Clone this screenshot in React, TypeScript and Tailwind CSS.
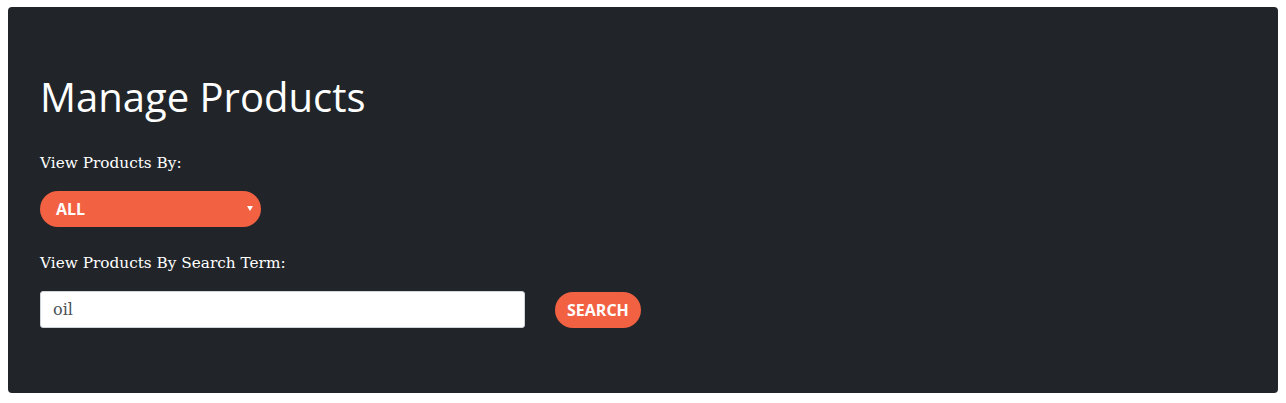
import React from "react";

const App: React.FC = () => {
  return (
    <div className="bg-white p-2 pt-[7px] h-[403px]">
      <div className="bg-[#212529] rounded-[4px] h-[386px] px-8 pt-[66px]">
        <h1 className="text-white text-[40px] leading-[1.2] font-['Open_Sans',sans-serif] font-normal mb-[30px]">
          Manage Products
        </h1>
        <p className="text-white text-[15.3px] leading-[24px] font-['DejaVu_Serif',serif] mb-4">
          View Products By:
        </p>
        <div className="relative w-[221px] h-9 rounded-full bg-[#f26142] flex items-center pl-4 mb-6">
          <span className="text-white font-bold text-[16px] font-['Open_Sans',sans-serif]">
            ALL
          </span>
          <span className="absolute right-[8px] top-[15px] w-0 h-0 border-l-[3px] border-r-[3px] border-t-[5px] border-l-transparent border-r-transparent border-t-white" />
        </div>
        <p className="text-white text-[15.3px] leading-[24px] font-['DejaVu_Serif',serif] mb-4">
          View Products By Search Term:
        </p>
        <div className="flex items-center gap-[30px]">
          <div className="w-[485px] h-[37px] bg-white border border-[#ced4da] rounded-[3px] flex items-center px-3">
            <span className="text-[#495057] text-[16px] font-['DejaVu_Serif',serif]">oil</span>
          </div>
          <button className="h-9 px-3 rounded-full bg-[#f26142] text-white font-bold text-[16px] font-['Open_Sans',sans-serif]">
            SEARCH
          </button>
        </div>
      </div>
    </div>
  );
};

export default App;
